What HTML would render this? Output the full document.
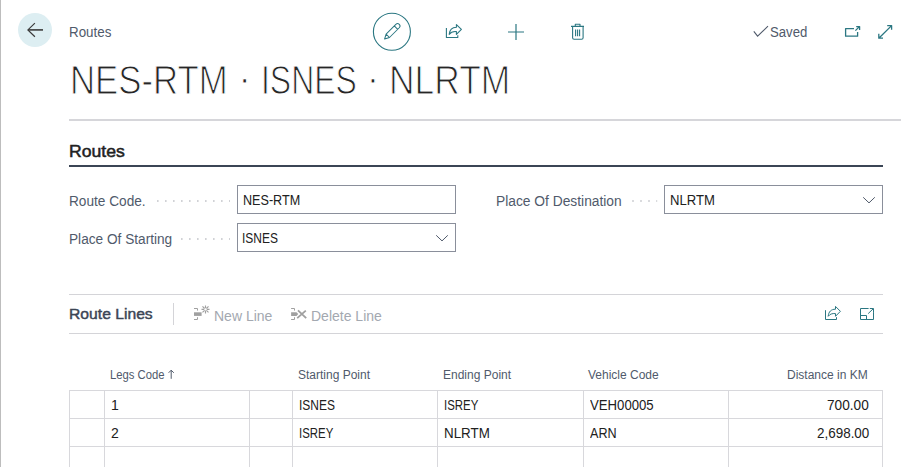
<!DOCTYPE html>
<html><head><meta charset="utf-8">
<style>
*{margin:0;padding:0;box-sizing:border-box}
html,body{width:913px;height:467px;overflow:hidden;background:#fff}
body{font-family:"Liberation Sans",sans-serif;color:#212121;position:relative}
.abs{position:absolute;white-space:nowrap;transform-origin:0 0}
.lborder{position:absolute;left:0;top:0;width:1px;height:467px;background:#bdbdbd}
.back{position:absolute;left:18px;top:13px;width:34px;height:34px;border-radius:50%;background:#ddeef2}
.title{top:58px;font-size:40px;color:#262626;-webkit-text-stroke:1.1px #fff}
.hr1{position:absolute;left:69px;top:119px;width:832px;height:2px;background:#d6d6da}
.hr2{position:absolute;left:69px;top:165px;width:814px;height:2px;background:#3b4555}
.lbl{font-size:14px;color:#505a6b}
.inp{position:absolute;height:29px;border:1px solid #8a8f9b;background:#fff}
.val{font-size:14px;color:#212121}
.hr3{position:absolute;left:69px;top:294px;width:814px;height:1px;background:#d4d4d8}
.hr4{position:absolute;left:69px;top:333px;width:814px;height:1px;background:#d4d4d8}
.vsep{position:absolute;left:173px;top:303px;width:1px;height:22px;background:#d4d4d8}
.act{font-size:14px;color:#a3a8b0}
.th{font-size:12px;color:#505a6b;top:368px}
.grid{position:absolute;left:69px;top:390px;width:815px;height:80px}
.hl{position:absolute;left:0;width:814px;height:1px;background:#d8d8dc}
.vl{position:absolute;top:0;width:1px;height:80px;background:#d8d8dc}
</style></head><body>
<div class="lborder"></div>
<div class="back"><svg width="34" height="34" viewBox="0 0 34 34"><path d="M10 16.9 H25" fill="none" stroke="#3b3b3b" stroke-width="1.6"/><path d="M16.9 10.1 L9.9 16.9 L16.9 23.8" fill="none" stroke="#3b3b3b" stroke-width="1.2"/></svg></div>
<div class="abs" style="left:69px;top:24px;font-size:14px;color:#505a6b;transform:scaleX(0.955)">Routes</div>

<!-- toolbar icons -->
<svg class="abs" style="left:0;top:0" width="913" height="60" viewBox="0 0 913 60">
 <g fill="none" stroke="#2b7782" stroke-width="1.2" stroke-linejoin="round">
  <circle cx="391.9" cy="31.8" r="18.5" stroke-width="1.1"/>
  <g transform="translate(384.4,39.2) rotate(-45)">
   <path d="M0.3 0 L4.8 -2.4 H18.6 A2.4 2.4 0 0 1 18.6 2.4 H4.8 Z M4.8 -2.4 V2.4 M16.4 -2.4 V2.4" stroke-width="1"/>
  </g>
  <path d="M446.4 28 V37.5 H457.8 V35.2" stroke-width="1.1"/>
  <path d="M449.2 34.3 C449.6 29.6 452.2 27.2 456.4 27.2 V24.6 L461.4 29.4 L456.4 34.4 V31.6 C453.2 31.2 450.8 32.2 449.2 34.3 Z" stroke-width="1.1"/>
  <path d="M516 24 V40 M508 32 H524" stroke-width="1.2"/>
  <path d="M571 26.4 H584 M575.3 26.4 V24.3 H580 V26.4 M572.6 26.4 V37.8 Q572.6 39.3 574.1 39.3 H581.6 Q583.1 39.3 583.1 37.8 V26.4 M575.6 29.4 V36.3 M577.6 29.4 V36.3 M579.6 29.4 V36.3" stroke-width="1.1"/>
  <path d="M854 28.6 H845.6 V36.2 H857.6 V32" stroke-width="1.3"/>
  <path d="M855.4 30.6 L859.4 26.6 M856.2 26.6 H859.6 V30" stroke-width="1.3"/>
  <path d="M878.8 38.2 L891.6 25.6 M887.2 25.6 H891.6 V29.8 M878.8 33.8 V38.2 H883" stroke-width="1.3"/>
 </g>
 <path d="M753.8 31.4 L757.6 36.2 L768 26.2" fill="none" stroke="#505a6b" stroke-width="1.1"/>
</svg>
<div class="abs" style="left:770px;top:24px;font-size:14px;color:#505a6b;transform:scaleX(0.94)">Saved</div>

<div class="abs title" style="left:69.7px;transform:scaleX(0.869)">NES-RTM</div>
<div class="abs title" style="left:260.6px;transform:scaleX(0.798)">ISNES</div>
<div class="abs title" style="left:388.6px;transform:scaleX(0.885)">NLRTM</div>
<div class="abs title" style="left:238px;top:56px">·</div>
<div class="abs title" style="left:366.2px;top:56px">·</div>
<div class="hr1"></div>
<div class="abs" style="left:69px;top:141.8px;font-size:16.8px;color:#212121;-webkit-text-stroke:0.5px #212121;transform:scaleX(1.05)">Routes</div>
<div class="hr2"></div>

<div class="abs lbl" style="left:69px;top:193px;transform:scaleX(0.975)">Route Code.</div>
<div class="abs lbl" style="left:69px;top:231px;transform:scaleX(0.975)">Place Of Starting</div>
<div class="abs lbl" style="left:496px;top:193px;transform:scaleX(0.985)">Place Of Destination</div>
<svg class="abs" style="left:0;top:195px" width="913" height="50" viewBox="0 195 913 50">
 <g fill="#c6c8cc">
  <rect x="157" y="200.2" width="1.6" height="1.6"/><rect x="165" y="200.2" width="1.6" height="1.6"/><rect x="173" y="200.2" width="1.6" height="1.6"/><rect x="181" y="200.2" width="1.6" height="1.6"/><rect x="189" y="200.2" width="1.6" height="1.6"/><rect x="197" y="200.2" width="1.6" height="1.6"/><rect x="205" y="200.2" width="1.6" height="1.6"/><rect x="213" y="200.2" width="1.6" height="1.6"/><rect x="221" y="200.2" width="1.6" height="1.6"/><rect x="229" y="200.2" width="1" height="1.6"/>
  <rect x="181" y="238.2" width="1.6" height="1.6"/><rect x="189" y="238.2" width="1.6" height="1.6"/><rect x="197" y="238.2" width="1.6" height="1.6"/><rect x="205" y="238.2" width="1.6" height="1.6"/><rect x="213" y="238.2" width="1.6" height="1.6"/><rect x="221" y="238.2" width="1.6" height="1.6"/><rect x="229" y="238.2" width="1" height="1.6"/>
  <rect x="632.2" y="200.2" width="1.6" height="1.6"/><rect x="640.2" y="200.2" width="1.6" height="1.6"/><rect x="648.2" y="200.2" width="1.6" height="1.6"/><rect x="656.2" y="200.2" width="1" height="1.6"/>
 </g>
</svg>
<div class="inp" style="left:237px;top:185px;width:219px"></div>
<div class="inp" style="left:237px;top:223px;width:219px"></div>
<div class="inp" style="left:664px;top:185px;width:219px"></div>
<svg class="abs" style="left:0;top:225px" width="913" height="20" viewBox="0 225 913 20">
 <path d="M436.2 235.3 L442 240.9 L447.8 235.3" fill="none" stroke="#505a6b" stroke-width="1"/>
</svg>
<svg class="abs" style="left:0;top:187px" width="913" height="20" viewBox="0 187 913 20">
 <path d="M863.2 197.3 L869 202.9 L874.8 197.3" fill="none" stroke="#505a6b" stroke-width="1"/>
</svg>
<div class="abs val" style="left:242.5px;top:192px;transform:scaleX(0.9)">NES-RTM</div>
<div class="abs val" style="left:242px;top:230px;transform:scaleX(0.855)">ISNES</div>
<div class="abs val" style="left:669.5px;top:192px;transform:scaleX(0.935)">NLRTM</div>

<div class="hr3"></div>
<div class="abs" style="left:69px;top:305.4px;font-size:15.5px;color:#3b4555;-webkit-text-stroke:0.45px #3b4555;transform:scaleX(1.012)">Route Lines</div>
<div class="vsep"></div>
<svg class="abs" style="left:0;top:300px" width="913" height="30" viewBox="0 300 913 30">
 <g fill="none" stroke="#a0a0a0" stroke-width="1">
  <path d="M194 308.5 H197.5 V310.6 M194 319.5 H197.5 V317.2"/>
  <path d="M205.5 305.4 V308.2 M205.5 310.6 V313.4 M201.5 309.4 H204.3 M206.7 309.4 H209.5 M202.5 306.4 L204.6 308.5 M206.4 310.3 L208.5 312.4 M208.5 306.4 L206.4 308.5 M204.6 310.3 L202.5 312.4" stroke-width="1.15"/>
  <path d="M291.1 308.5 H294.5 V310.6 M291.1 319.5 H294.5 V317.2"/>
  <path d="M298 310.4 L306.2 318.2 M297.2 318.2 L305.8 310.6" stroke-width="1.8"/>
 </g>
 <g fill="#a0a0a0">
  <rect x="194" y="312.3" width="7.6" height="3.6"/>
  <path d="M291.1 312.3 H296.5 L298.2 314.1 L296.5 315.9 H291.1 Z"/>
 </g>
 <g fill="none" stroke="#2b7782" stroke-width="1.1" stroke-linejoin="round">
  <path d="M825.5 310.2 V319.5 H836.5 V317.2" stroke-width="1"/>
  <path d="M828.2 316.3 C828.6 311.6 831.2 309.2 835.5 309.2 V306.4 L840.4 311.3 L835.5 316.3 V313.6 C832.2 313.2 829.8 314.2 828.2 316.3 Z" stroke-width="1"/>
  <path d="M868.6 308.5 H860.5 V319.5 H873.5 V312.2 M860.5 315.5 H866.5 V319.5 M868.2 313.6 L873.2 308.8 M869.8 308.5 H873.5 V312.4" stroke-width="1"/>
 </g>
</svg>
<div class="abs act" style="left:214px;top:308px">New Line</div>
<div class="abs act" style="left:311px;top:308px">Delete Line</div>
<div class="hr4"></div>

<div class="abs th" style="left:110px;transform:scaleX(0.94)">Legs Code</div>
<svg class="abs" style="left:166px;top:368px" width="10" height="14" viewBox="166 368 10 14"><path d="M171.2 370.2 V378.8 M168.6 372.8 L171.2 370.2 L173.8 372.8" fill="none" stroke="#505a6b" stroke-width="1"/></svg>
<div class="abs th" style="left:298px">Starting Point</div>
<div class="abs th" style="left:443px">Ending Point</div>
<div class="abs th" style="left:588px">Vehicle Code</div>
<div class="abs th" style="left:787px">Distance in KM</div>

<div class="grid">
 <div class="hl" style="top:0"></div>
 <div class="hl" style="top:28px"></div>
 <div class="hl" style="top:56px"></div>
 <div class="vl" style="left:0"></div>
 <div class="vl" style="left:35px"></div>
 <div class="vl" style="left:180px"></div>
 <div class="vl" style="left:223px"></div>
 <div class="vl" style="left:368px"></div>
 <div class="vl" style="left:514px"></div>
 <div class="vl" style="left:659px"></div>
 <div class="vl" style="left:813px"></div>
</div>
<div class="abs val" style="left:111px;top:397px">1</div>
<div class="abs val" style="left:298.5px;top:397px;transform:scaleX(0.855)">ISNES</div>
<div class="abs val" style="left:444px;top:397px;transform:scaleX(0.815)">ISREY</div>
<div class="abs val" style="left:589.5px;top:397px;transform:scaleX(0.94)">VEH00005</div>
<div class="abs val" style="left:827px;top:397px;transform:scaleX(0.975)">700.00</div>
<div class="abs val" style="left:111px;top:425px">2</div>
<div class="abs val" style="left:298.5px;top:425px;transform:scaleX(0.815)">ISREY</div>
<div class="abs val" style="left:444px;top:425px;transform:scaleX(0.955)">NLRTM</div>
<div class="abs val" style="left:589.5px;top:425px;transform:scaleX(0.9)">ARN</div>
<div class="abs val" style="left:816.5px;top:425px;transform:scaleX(0.96)">2,698.00</div>
</body></html>
